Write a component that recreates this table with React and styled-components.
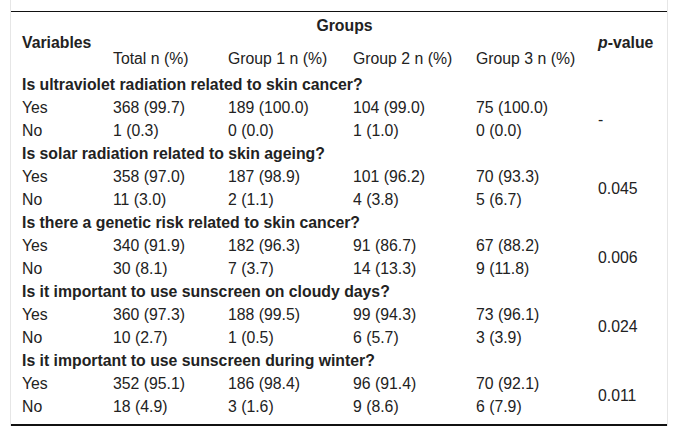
import React from "react";
import styled, { createGlobalStyle } from "styled-components";

const Global = createGlobalStyle`
  html, body { margin: 0; padding: 0; background: #fff; }
  body { font-family: "Liberation Sans", Arial, sans-serif; color: #222; }
`;

const Frame = styled.div`
  margin: 0 10px;
  padding-top: 11px;
  border-left: 1px solid #e6e6e6;
  border-right: 1px solid #e6e6e6;
`;

const TableWrap = styled.div`
  border-top: 1px solid #111;
  border-bottom: 2px solid #111;
  padding-bottom: 6px;
`;

const Table = styled.table`
  width: 656px;
  border-collapse: collapse;
  table-layout: fixed;
  font-size: 15.8px;
  line-height: 17px;
`;

const HeadCell = styled.th`
  font-weight: ${(p) => (p.$bold ? 700 : 400)};
  text-align: ${(p) => (p.$center ? "center" : "left")};
  padding: ${(p) => p.$pad || "3px 0 3px 11px"};
  vertical-align: middle;
  white-space: nowrap;
`;

const Italic = styled.i`
  font-style: italic;
`;

const QuestionCell = styled.td`
  font-weight: 700;
  padding: 3px 0 3px 11px;
  white-space: nowrap;
`;

const Cell = styled.td`
  padding: 3px 0 3px 11px;
  vertical-align: middle;
  white-space: nowrap;
`;

const sections = [
  {
    q: "Is ultraviolet radiation related to skin cancer?",
    yes: ["368 (99.7)", "189 (100.0)", "104 (99.0)", "75 (100.0)"],
    no: ["1 (0.3)", "0 (0.0)", "1 (1.0)", "0 (0.0)"],
    p: "-",
  },
  {
    q: "Is solar radiation related to skin ageing?",
    yes: ["358 (97.0)", "187 (98.9)", "101 (96.2)", "70 (93.3)"],
    no: ["11 (3.0)", "2 (1.1)", "4 (3.8)", "5 (6.7)"],
    p: "0.045",
  },
  {
    q: "Is there a genetic risk related to skin cancer?",
    yes: ["340 (91.9)", "182 (96.3)", "91 (86.7)", "67 (88.2)"],
    no: ["30 (8.1)", "7 (3.7)", "14 (13.3)", "9 (11.8)"],
    p: "0.006",
  },
  {
    q: "Is it important to use sunscreen on cloudy days?",
    yes: ["360 (97.3)", "188 (99.5)", "99 (94.3)", "73 (96.1)"],
    no: ["10 (2.7)", "1 (0.5)", "6 (5.7)", "3 (3.9)"],
    p: "0.024",
  },
  {
    q: "Is it important to use sunscreen during winter?",
    yes: ["352 (95.1)", "186 (98.4)", "96 (91.4)", "70 (92.1)"],
    no: ["18 (4.9)", "3 (1.6)", "9 (8.6)", "6 (7.9)"],
    p: "0.011",
  },
];

export default function App() {
  return (
    <>
      <Global />
      <Frame>
        <TableWrap>
          <Table>
            <colgroup>
              <col style={{ width: 91 }} />
              <col style={{ width: 115 }} />
              <col style={{ width: 125 }} />
              <col style={{ width: 123 }} />
              <col style={{ width: 122 }} />
              <col style={{ width: 80 }} />
            </colgroup>
            <thead>
              <tr>
                <HeadCell rowSpan={2} $bold>Variables</HeadCell>
                <HeadCell colSpan={4} $bold $center $pad="5px 0 4px 0">Groups</HeadCell>
                <HeadCell rowSpan={2} $bold>
                  <Italic>p</Italic>-value
                </HeadCell>
              </tr>
              <tr>
                <HeadCell $pad="12px 0 6px 11px">Total n (%)</HeadCell>
                <HeadCell $pad="12px 0 6px 11px">Group 1 n (%)</HeadCell>
                <HeadCell $pad="12px 0 6px 11px">Group 2 n (%)</HeadCell>
                <HeadCell $pad="12px 0 6px 11px">Group 3 n (%)</HeadCell>
              </tr>
            </thead>
            <tbody>
              {sections.map((s) => (
                <React.Fragment key={s.q}>
                  <tr>
                    <QuestionCell colSpan={6}>{s.q}</QuestionCell>
                  </tr>
                  <tr>
                    <Cell>Yes</Cell>
                    {s.yes.map((v, i) => (
                      <Cell key={i}>{v}</Cell>
                    ))}
                    <Cell rowSpan={2}>{s.p}</Cell>
                  </tr>
                  <tr>
                    <Cell>No</Cell>
                    {s.no.map((v, i) => (
                      <Cell key={i}>{v}</Cell>
                    ))}
                  </tr>
                </React.Fragment>
              ))}
            </tbody>
          </Table>
        </TableWrap>
      </Frame>
    </>
  );
}
